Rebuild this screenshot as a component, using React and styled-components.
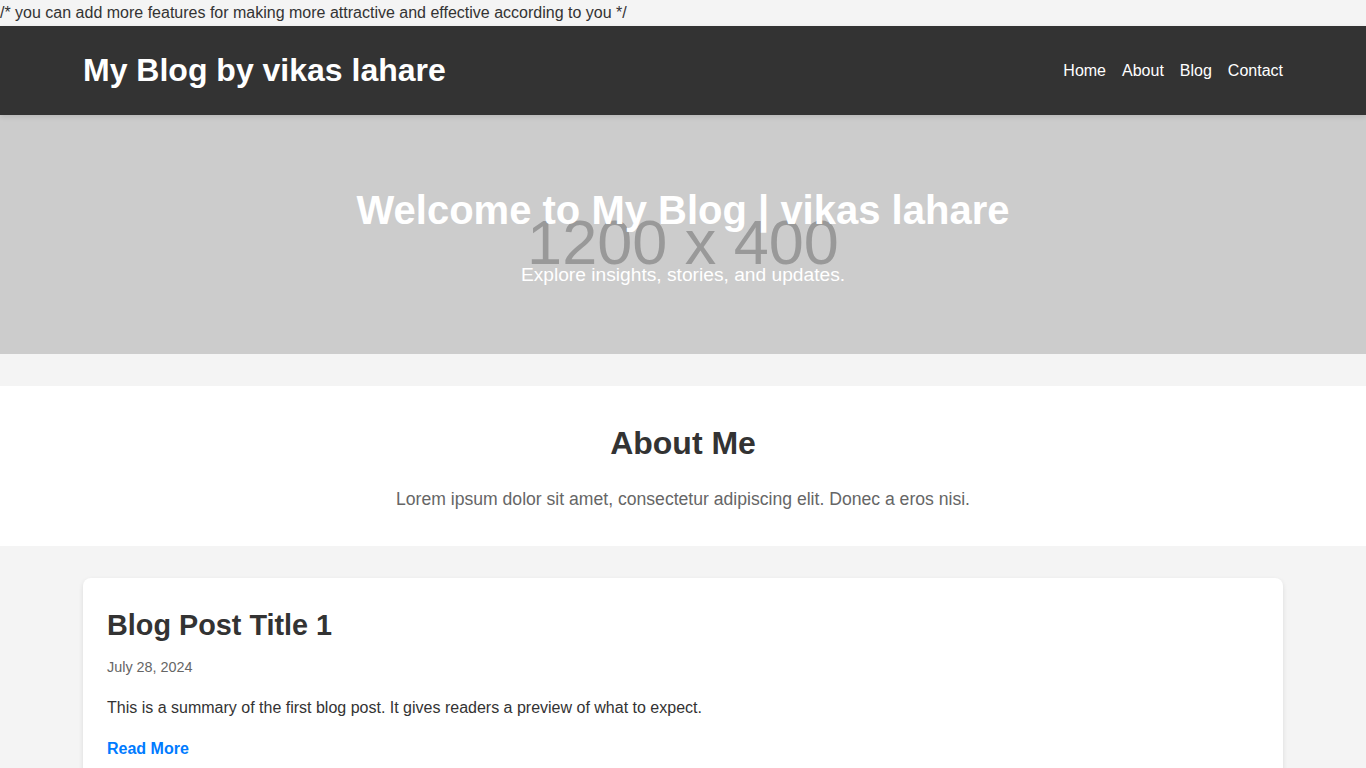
import React from 'react'
import styled, { createGlobalStyle } from 'styled-components'

const GlobalStyle = createGlobalStyle`
  body {
    margin: 0;
    padding: 0;
    font-family: "Liberation Sans", Arial, sans-serif;
    line-height: 1.6;
    background-color: #f4f4f4;
    color: #333;
  }
`

const Note = styled.div`
  font-size: 16px;
  height: 26px;
`

const Header = styled.header`
  background: #333;
  color: #fff;
  padding: 19px 0;
  box-shadow: 0 2px 5px rgba(0, 0, 0, 0.1);
  position: relative;
  z-index: 1;
`

const Container = styled.div`
  width: 1200px;
  margin: 0 auto;
`

const HeaderRow = styled(Container)`
  display: flex;
  justify-content: space-between;
  align-items: center;
`

const Logo = styled.h1`
  margin: 0;
  font-size: 32px;
  font-weight: 700;
`

const Nav = styled.nav`
  display: flex;
  gap: 16px;
`

const NavLink = styled.a`
  color: #fff;
  text-decoration: none;
  font-size: 16px;
`

const Hero = styled.section`
  position: relative;
  background: #ccc;
  height: 239px;
  overflow: hidden;
  display: flex;
  flex-direction: column;
  align-items: center;
  justify-content: center;
  color: #fff;
  text-align: center;
`

// the "1200 x 400" text of the placeholder image behind the hero
const Placeholder = styled.div`
  position: absolute;
  left: 0;
  right: 0;
  top: 96px;
  font-size: 63px;
  line-height: 1;
  color: #999;
  text-align: center;
`

const HeroTitle = styled.h2`
  position: relative;
  margin: 0 0 18px;
  font-size: 40px;
  line-height: 1.6;
  font-weight: 700;
`

const HeroSub = styled.p`
  position: relative;
  margin: 0;
  font-size: 19.2px;
  line-height: 1.6;
`

const About = styled.section`
  background: #fff;
  margin-top: 32px;
  padding: 32px 0;
  text-align: center;
`

const AboutTitle = styled.h2`
  margin: 0 0 16px;
  font-size: 32px;
  font-weight: 700;
`

const AboutText = styled.p`
  margin: 0;
  font-size: 17.6px;
  color: #666;
`

const Posts = styled(Container)`
  padding-top: 32px;
`

const Card = styled.article`
  background: #fff;
  border-radius: 8px;
  box-shadow: 0 2px 5px rgba(0, 0, 0, 0.1);
  padding: 24px;
`

const PostTitle = styled.h3`
  margin: 0 0 8px;
  font-size: 28.8px;
  line-height: 1.6;
`

const PostDate = styled.p`
  margin: 0 0 16px;
  font-size: 14.4px;
  color: #666;
`

const PostText = styled.p`
  margin: 0 0 16px;
  font-size: 16px;
`

const ReadMore = styled.a`
  color: #007bff;
  font-weight: 700;
  text-decoration: none;
`

const App = () => {
  return (
    <>
      <GlobalStyle />
      <Note>/* you can add more features for making more attractive and effective according to you */</Note>
      <Header>
        <HeaderRow>
          <Logo>My Blog by vikas lahare</Logo>
          <Nav>
            <NavLink href="#">Home</NavLink>
            <NavLink href="#">About</NavLink>
            <NavLink href="#">Blog</NavLink>
            <NavLink href="#">Contact</NavLink>
          </Nav>
        </HeaderRow>
      </Header>
      <Hero>
        <Placeholder>1200 x 400</Placeholder>
        <HeroTitle>Welcome to My Blog | vikas lahare</HeroTitle>
        <HeroSub>Explore insights, stories, and updates.</HeroSub>
      </Hero>
      <About>
        <AboutTitle>About Me</AboutTitle>
        <AboutText>Lorem ipsum dolor sit amet, consectetur adipiscing elit. Donec a eros nisi.</AboutText>
      </About>
      <Posts>
        <Card>
          <PostTitle>Blog Post Title 1</PostTitle>
          <PostDate>July 28, 2024</PostDate>
          <PostText>This is a summary of the first blog post. It gives readers a preview of what to expect.</PostText>
          <ReadMore href="#">Read More</ReadMore>
        </Card>
      </Posts>
    </>
  )
}

export default App
